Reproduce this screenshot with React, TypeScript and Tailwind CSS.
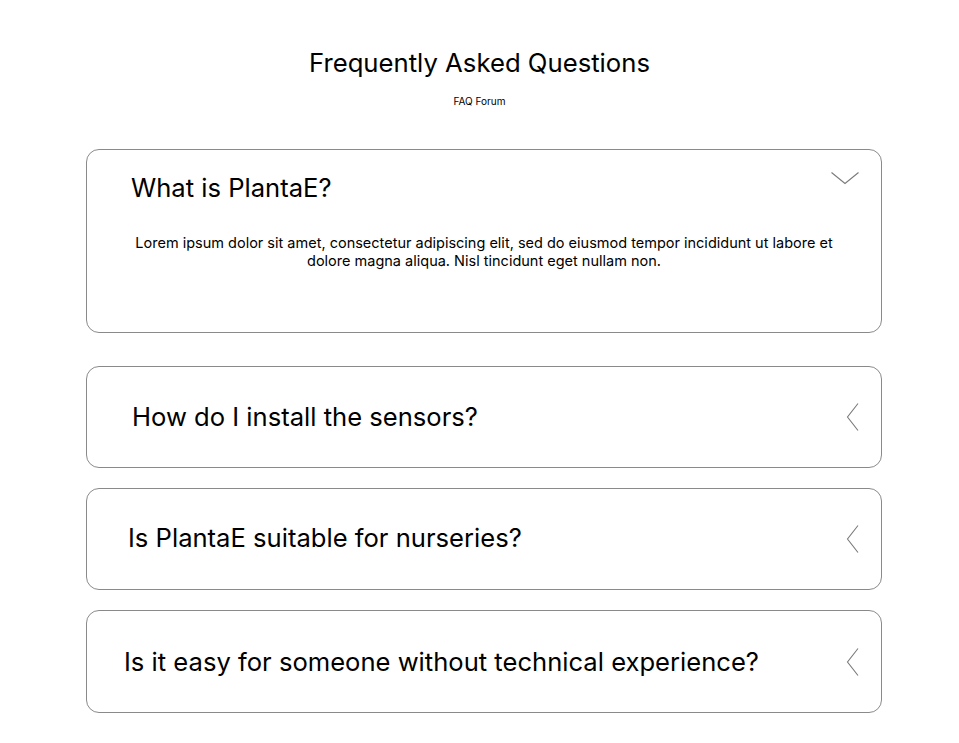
import React from "react";

const ChevronLeft = () => (
  <svg width="14" height="30" viewBox="0 0 14 30" fill="none">
    <path d="M12 1.5 L1.5 15 L12 28.5" stroke="#7a7a7a" strokeWidth="1.1" />
  </svg>
);

const ChevronDown = () => (
  <svg width="30" height="14" viewBox="0 0 30 14" fill="none">
    <path d="M1.5 1.5 L15 12.5 L28.5 1.5" stroke="#7a7a7a" strokeWidth="1.1" />
  </svg>
);

const Item = ({ q, pl, h }: { q: string; pl: string; h: string }) => (
  <div className={`flex ${h} items-center justify-between rounded-[13px] border border-[#8a8a8a] pr-[21px]`}>
    <span className={`${pl} text-[25.6px] leading-[32px] text-black`}>{q}</span>
    <ChevronLeft />
  </div>
);

export default function App() {
  return (
    <div className="min-h-[743px] w-full bg-white" style={{ fontFamily: "Inter, 'Noto Sans', sans-serif" }}>
      <div className="flex flex-col items-center pt-[47px]">
        <h1 className="text-[25.7px] leading-[32px] text-black">Frequently Asked Questions</h1>
        <p className="mt-[16px] text-[10px] leading-[12px] text-black">FAQ Forum</p>
      </div>
      <div className="ml-[86px] mt-[42px] flex w-[796px] flex-col">
        <div className="h-[184px] rounded-[13px] border border-[#8a8a8a]">
          <div className="flex items-start justify-between pr-[21px] pt-[22px]">
            <span className="pl-[44px] text-[25.6px] leading-[32px] text-black">What is PlantaE?</span>
            <div className="-mt-[1px]">
              <ChevronDown />
            </div>
          </div>
          <p className="mt-[30px] px-[36px] text-center text-[14.5px] leading-[18px] text-black">
            Lorem ipsum dolor sit amet, consectetur adipiscing elit, sed do eiusmod tempor incididunt ut labore et dolore magna aliqua. Nisl tincidunt eget nullam non.
          </p>
        </div>
        <div className="mt-[33px] flex flex-col gap-[20px]">
          <Item q="How do I install the sensors?" pl="pl-[45px]" h="h-[102px]" />
          <Item q="Is PlantaE suitable for nurseries?" pl="pl-[41px] -mt-[3px]" h="h-[102px]" />
          <Item q="Is it easy for someone without technical experience?" pl="pl-[37px]" h="h-[103px]" />
        </div>
      </div>
    </div>
  );
}
